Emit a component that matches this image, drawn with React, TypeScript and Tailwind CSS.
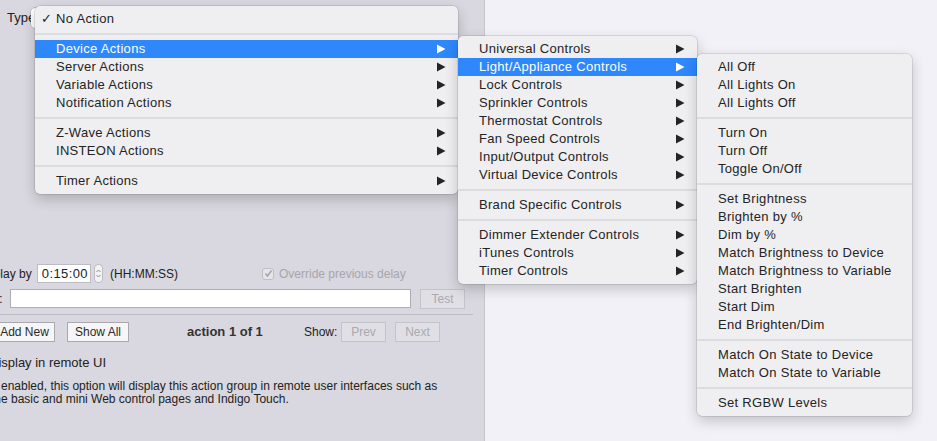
import React from 'react';

type Item = { label: string; sub?: boolean; active?: boolean; check?: boolean } | 'sep';

const typeMenu: Item[] = [
  { label: 'No Action', check: true },
  'sep',
  { label: 'Device Actions', sub: true, active: true },
  { label: 'Server Actions', sub: true },
  { label: 'Variable Actions', sub: true },
  { label: 'Notification Actions', sub: true },
  'sep',
  { label: 'Z-Wave Actions', sub: true },
  { label: 'INSTEON Actions', sub: true },
  'sep',
  { label: 'Timer Actions', sub: true },
];

const deviceMenu: Item[] = [
  { label: 'Universal Controls', sub: true },
  { label: 'Light/Appliance Controls', sub: true, active: true },
  { label: 'Lock Controls', sub: true },
  { label: 'Sprinkler Controls', sub: true },
  { label: 'Thermostat Controls', sub: true },
  { label: 'Fan Speed Controls', sub: true },
  { label: 'Input/Output Controls', sub: true },
  { label: 'Virtual Device Controls', sub: true },
  'sep',
  { label: 'Brand Specific Controls', sub: true },
  'sep',
  { label: 'Dimmer Extender Controls', sub: true },
  { label: 'iTunes Controls', sub: true },
  { label: 'Timer Controls', sub: true },
];

const lightMenu: Item[] = [
  { label: 'All Off' },
  { label: 'All Lights On' },
  { label: 'All Lights Off' },
  'sep',
  { label: 'Turn On' },
  { label: 'Turn Off' },
  { label: 'Toggle On/Off' },
  'sep',
  { label: 'Set Brightness' },
  { label: 'Brighten by %' },
  { label: 'Dim by %' },
  { label: 'Match Brightness to Device' },
  { label: 'Match Brightness to Variable' },
  { label: 'Start Brighten' },
  { label: 'Start Dim' },
  { label: 'End Brighten/Dim' },
  'sep',
  { label: 'Match On State to Device' },
  { label: 'Match On State to Variable' },
  'sep',
  { label: 'Set RGBW Levels' },
];

function Arrow() {
  return (
    <svg width="9" height="10" viewBox="0 0 9 10" className="mt-[4px] shrink-0">
      <polygon points="0,0.5 8.5,5 0,9.5" fill="currentColor" />
    </svg>
  );
}

function Menu({ items, className }: { items: Item[]; className: string }) {
  return (
    <div
      className={`absolute rounded-[5px] bg-[#efeff1] py-1 tracking-[0.3px] shadow-[0_0_0_0.5px_rgba(0,0,0,0.18),0_5px_14px_rgba(0,0,0,0.2)] ${className}`}
    >
      {items.map((it, i) =>
        it === 'sep' ? (
          <div key={i} className="flex h-3 items-center">
            <div className="h-[2px] w-full bg-[#dcdcde]" />
          </div>
        ) : (
          <div
            key={i}
            className={`relative flex h-[18px] items-start pl-[21px] pr-[12px] ${
              it.active ? 'bg-[#2e87fb] text-white' : 'text-[#242424]'
            }`}
          >
            {it.check && (
              <span className="absolute left-[6px] top-0 leading-[17px]">✓</span>
            )}
            <span className="flex-1 whitespace-nowrap leading-[17px]">{it.label}</span>
            {it.sub && <Arrow />}
          </div>
        )
      )}
    </div>
  );
}

function Btn({ label, w, disabled }: { label: string; w: string; disabled?: boolean }) {
  return (
    <div
      className={`flex h-[20px] shrink-0 items-center justify-center border text-[12px] ${w} ${
        disabled
          ? 'border-[#c4c3c9] bg-[#e0dfe5] text-[#aaa9af]'
          : 'border-[#a9a8ae] bg-[#f6f6f8] text-[#2a2a2a]'
      }`}
    >
      {label}
    </div>
  );
}

export default function App() {
  return (
    <div className="relative flex h-[441px] w-[937px] overflow-hidden bg-[#f2f1f8] font-['Liberation_Sans',Arial,sans-serif] text-[13px] text-[#222]">
      {/* dialog window behind the menus */}
      <div className="flex h-full w-[485px] shrink-0 flex-col overflow-hidden border-r border-[#c8c6cd] bg-[#d9d7df]">
        <div className="mt-2 flex h-5 items-center">
          <span className="w-[31px] pl-[7px]">Type:</span>
          <div className="flex h-5 w-[426px] justify-end rounded-[4px] bg-white shadow-[0_0_0_0.5px_rgba(0,0,0,0.25)]">
            <div className="h-full w-[18px] rounded-r-[4px] bg-[#2d7cf6]" />
          </div>
        </div>

        <div className="mt-[236px] flex h-[19px] items-center text-[12px]">
          <span className="ml-[-15px] w-[52px] shrink-0 whitespace-nowrap">Delay by</span>
          <div className="flex h-[19px] w-[54px] shrink-0 items-center justify-end border border-[#bdbcc1] bg-white pr-[2px] text-[13px] tracking-[0.4px]">
            0:15:00
          </div>
          <div className="ml-[3px] flex h-[19px] w-[9px] shrink-0 flex-col items-center justify-center rounded-[4px] border border-[#bdbcc1] bg-[#f3f3f5]">
            <svg width="7" height="13" viewBox="0 0 7 13">
              <path d="M1.5 5 L3.5 3 L5.5 5 M1.5 8 L3.5 10 L5.5 8" stroke="#8a8a8f" strokeWidth="1" fill="none" />
            </svg>
          </div>
          <span className="ml-[7px] w-[152px] shrink-0">(HH:MM:SS)</span>
          <div className="flex h-[12px] w-[12px] shrink-0 items-center justify-center rounded-[3px] border border-[#bfbec4] bg-[#e6e5ea]">
            <svg width="9" height="9" viewBox="0 0 9 9">
              <path d="M1.5 4.5 L3.5 7 L7.5 1.5" stroke="#a3a2a8" strokeWidth="1.4" fill="none" />
            </svg>
          </div>
          <span className="ml-[5px] whitespace-nowrap text-[#a7a6ac]">Override previous delay</span>
        </div>

        <div className="mt-[6px] flex h-[19px] items-center">
          <span className="ml-[-1px] w-[11px] shrink-0">:</span>
          <div className="h-[19px] w-[401px] shrink-0 border border-[#aeadb2] bg-white" />
          <div className="ml-[9px]">
            <Btn label="Test" w="w-[45px]" disabled />
          </div>
        </div>

        <div className="mt-[6px] h-px w-[473px] bg-[#bfbdc4]" />

        <div className="mt-[7px] flex h-[20px] items-center">
          <div className="ml-[-6px]">
            <Btn label="Add New" w="w-[61px]" />
          </div>
          <div className="ml-[12px]">
            <Btn label="Show All" w="w-[62px]" />
          </div>
          <span className="ml-[58px] w-[117px] shrink-0 font-bold text-[#333]">action 1 of 1</span>
          <span className="w-[37px] shrink-0 text-[12px]">Show:</span>
          <Btn label="Prev" w="w-[45px]" disabled />
          <div className="ml-[9px]">
            <Btn label="Next" w="w-[45px]" disabled />
          </div>
        </div>

        <div className="ml-[-11px] mt-[13px] whitespace-nowrap leading-4">Display in remote UI</div>

        <div className="ml-[-9px] mt-[9px] whitespace-nowrap text-[12px] leading-[13px]">
          If enabled, this option will display this action group in remote user interfaces such as
          <br />
          the basic and mini Web control pages and Indigo Touch.
        </div>
      </div>

      <Menu items={typeMenu} className="left-[35px] top-[6px] w-[423px]" />
      <Menu items={deviceMenu} className="left-[458px] top-[36px] w-[239px]" />
      <Menu items={lightMenu} className="left-[697px] top-[54px] w-[215px]" />
    </div>
  );
}
